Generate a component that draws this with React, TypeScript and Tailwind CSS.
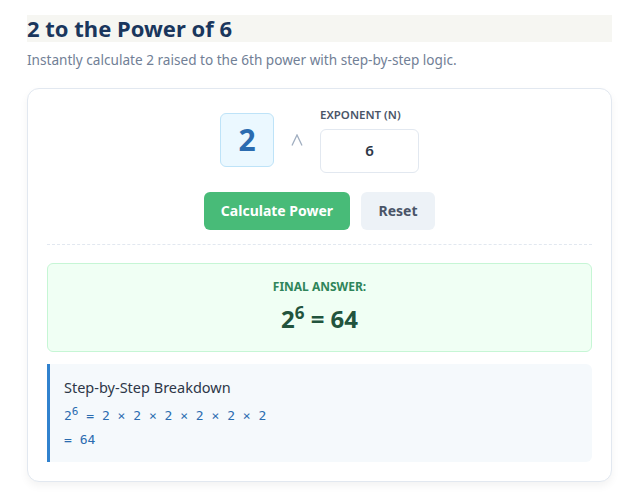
import React from "react";

export default function App() {
  return (
    <div className="min-h-[500px] bg-white px-[27px] pt-[15px]" style={{ fontFamily: '"Noto Sans", "Open Sans", sans-serif' }}>
      <div className="w-[585px]">
        <h1 className="bg-[#f6f6f2] text-[22px] leading-[27px] font-bold text-[#1a365d]">2 to the Power of 6</h1>
        <p className="mt-[8px] text-[13.6px] text-[#718096]">Instantly calculate 2 raised to the 6th power with step-by-step logic.</p>
        <div className="mt-[18px] rounded-[12px] border border-[#e2e8f0] bg-white px-[19px] pt-[17px] pb-[19px] shadow-[0_4px_8px_rgba(0,0,0,0.05)]">
          <div className="flex items-end justify-center">
            <div className="mb-[6px] flex h-[54px] w-[54px] items-center justify-center rounded-[6px] border border-[#bee3f8] bg-[#ebf8ff] text-[30px] font-bold text-[#2b6cb0]">2</div>
            <div className="mx-[17px] mb-[27px] flex w-[12px] justify-center">
              <svg width="12" height="12" viewBox="0 0 12 12" fill="none" stroke="#a0aec0" strokeWidth="1.3">
                <path d="M1 11.5 L6 1 L11 11.5" />
              </svg>
            </div>
            <div className="flex flex-col">
              <label className="mb-[5px] text-[11.5px] font-semibold text-[#4a5568]">EXPONENT (N)</label>
              <div className="flex h-[44px] w-[99px] items-center justify-center rounded-[6px] border border-[#e2e8f0] text-[15px] font-semibold text-[#2d3748]">6</div>
            </div>
          </div>
          <div className="mt-[19px] flex justify-center gap-[11px]">
            <button className="h-[38px] w-[146px] rounded-[6px] bg-[#48bb78] text-[14px] font-bold text-white">Calculate Power</button>
            <button className="h-[38px] w-[74px] rounded-[6px] bg-[#edf2f7] text-[14px] font-bold text-[#4a5568]">Reset</button>
          </div>
          <div className="mt-[14px] border-t border-dashed border-[#e2e8f0]" />
          <div className="mt-[18px] flex h-[89px] flex-col items-center rounded-[6px] border border-[#c6f6d5] bg-[#f0fff4] pt-[14px]">
            <div className="text-[12px] font-bold text-[#2f855a]">FINAL ANSWER:</div>
            <div className="mt-[6px] text-[24px] font-bold leading-[34px] text-[#22543d]">
              2<sup className="text-[17px]">6</sup> = 64
            </div>
          </div>
          <div className="mt-[12px] rounded-r-[6px] border-l-[3px] border-[#3182ce] bg-[#f5f9fc] pl-[14px] pt-[13px] pb-[10px]">
            <div className="text-[14.5px] text-[#2d3748]">Step-by-Step Breakdown</div>
            <div className="mt-[6px] text-[13px] leading-[24px] text-[#2b6cb0]" style={{ fontFamily: '"DejaVu Sans Mono", monospace' }}>
              <div>2<sup className="text-[11px]">6</sup> = 2 × 2 × 2 × 2 × 2 × 2</div>
              <div>= 64</div>
            </div>
          </div>
        </div>
      </div>
    </div>
  );
}
